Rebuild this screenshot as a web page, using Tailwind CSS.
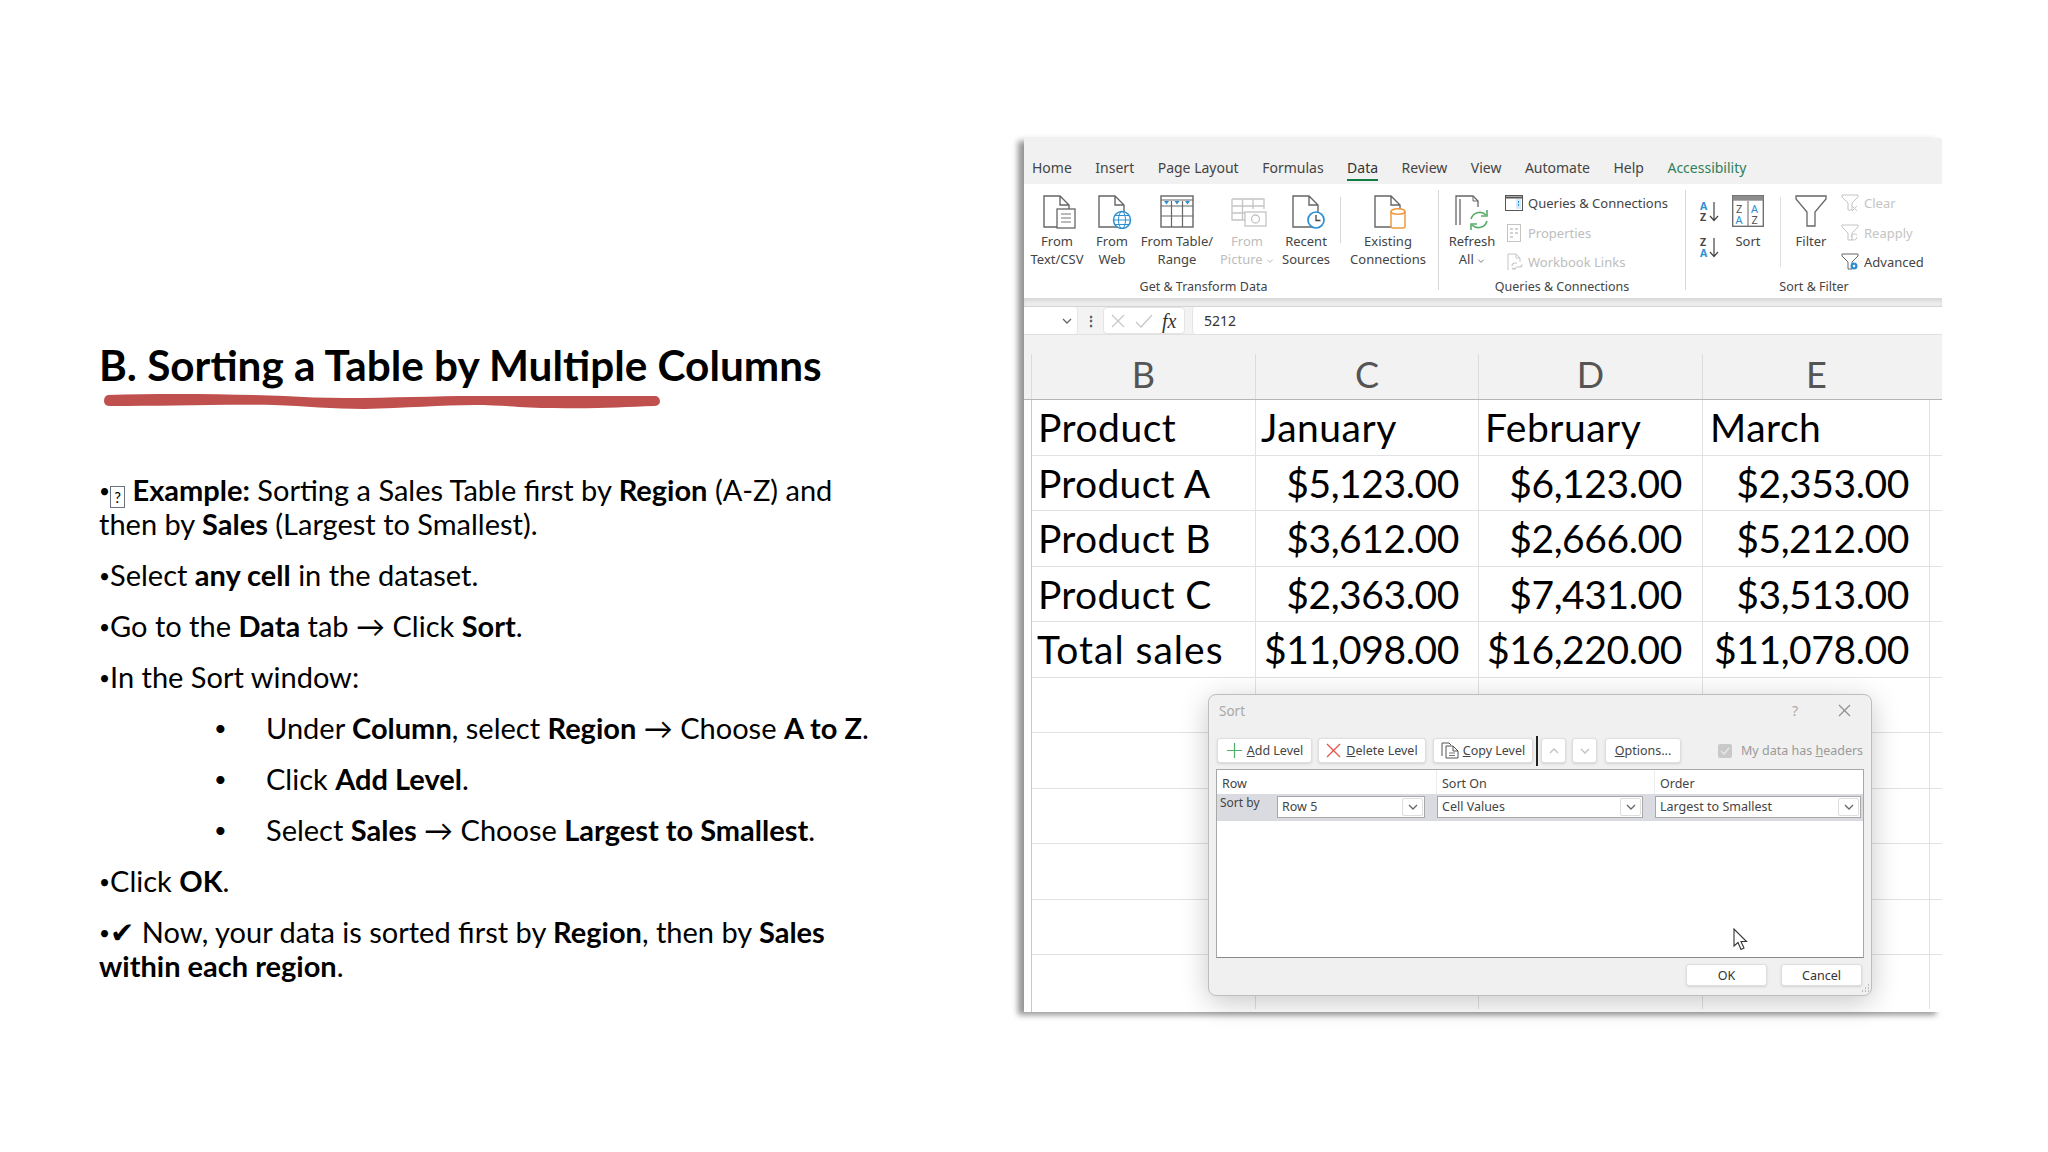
<!DOCTYPE html>
<html lang="en">
<head>
  <meta charset="UTF-8" />
  <title>Sorting a Table by Multiple Columns</title>
  <script src="https://cdn.jsdelivr.net/npm/@tailwindcss/browser@4"></script>
</head>
<body class="bg-white">
<!-- hidden icon defs -->
<svg class="hidden">
  <symbol id="doc" viewBox="0 0 27 34"><path d="M1 1H17L26 10V32H1Z M17 1V10H26" fill="none" stroke="#666" stroke-width="1.4"/></symbol>
  <symbol id="chev" viewBox="0 0 12 8"><path d="M2 2L6 6L10 2" fill="none" stroke="#666" stroke-width="1.3"/></symbol>
</svg>

<div class="flex w-[2048px] h-[1152px] overflow-hidden">
  <!-- left column: slide text -->
  <div class="w-[1024px] shrink-0 pl-[99px] pt-[337px] font-['Lato','DejaVu_Sans',sans-serif] text-black">
    <h1 class="text-[42.3px] leading-[56px] font-bold whitespace-nowrap">B. Sorting a Table by Multiple Columns</h1>
    <svg class="block ml-[5px]" width="557" height="17" viewBox="0 0 557 17"><path d="M4 2C60 0 130 1 180 3C200 4 220 5 240 5C290 5 330 3 370 3C420 3 500 3 552 3Q556 4 556 9Q555 13 550 13C520 14 490 16 450 15C420 15 400 12 370 12C340 12 300 15 260 16C230 16 200 13 170 12C120 11 60 13 6 13Q0 13 0 8Q0 3 4 2Z" fill="#c0504d"/></svg>

    <div class="mt-[63px] flex flex-col gap-[17px] text-[29px] leading-[34px] whitespace-nowrap">
      <p><span class="text-[19px] leading-none align-[3px]">•</span><span class="inline-block w-[15px] h-[22px] my-[-3px] border border-gray-500 text-[15px] leading-[20px] text-center align-[-2px]">?</span> <b>Example:</b> Sorting a Sales Table first by <b>Region</b> (A-Z) and<br>then by <b>Sales</b> (Largest to Smallest).</p>
      <p><span class="text-[19px] leading-none align-[3px]">•</span>Select <b>any cell</b> in the dataset.</p>
      <p><span class="text-[19px] leading-none align-[3px]">•</span>Go to the <b>Data</b> tab <span class="leading-none">→</span> Click <b>Sort</b>.</p>
      <p><span class="text-[19px] leading-none align-[3px]">•</span>In the Sort window:</p>
      <p class="flex"><span class="w-[167px] pl-[115px] text-[22px]">•</span><span>Under <b>Column</b>, select <b>Region</b> <span class="leading-none">→</span> Choose <b>A to Z</b>.</span></p>
      <p class="flex"><span class="w-[167px] pl-[115px] text-[22px]">•</span><span>Click <b>Add Level</b>.</span></p>
      <p class="flex"><span class="w-[167px] pl-[115px] text-[22px]">•</span><span>Select <b>Sales</b> <span class="leading-none">→</span> Choose <b>Largest to Smallest</b>.</span></p>
      <p><span class="text-[19px] leading-none align-[3px]">•</span>Click <b>OK</b>.</p>
      <p><span class="text-[19px] leading-none align-[3px]">•</span><span class="leading-none">✔</span> Now, your data is sorted first by <b>Region</b>, then by <b>Sales</b><br><b>within each region</b>.</p>
    </div>
  </div>

  <!-- right column: excel screenshot -->
  <div class="pt-[138px]">
    <div class="w-[918px] h-[874px] flex flex-col bg-white shadow-[-6px_3px_6px_rgba(0,0,0,0.42)] font-['Noto_Sans',sans-serif] text-[#444]">
      <!-- tabs -->
      <div class="h-[46px] shrink-0 bg-[#f1f1f1] flex items-start gap-[23.5px] pl-[8px] pt-[20px] text-[14px] leading-[20px] text-[#444]">
        <span>Home</span><span>Insert</span><span>Page Layout</span><span>Formulas</span>
        <span class="border-b-2 border-[#107c41] pb-[1px] text-[#333]">Data</span>
        <span>Review</span><span>View</span><span>Automate</span><span>Help</span>
        <span class="text-[#2f8059]">Accessibility</span>
      </div>

      <!-- ribbon -->
      <div class="h-[114px] shrink-0 bg-white flex text-[13px] leading-[18px]">
        <!-- Get & Transform -->
        <div class="w-[414px] flex flex-col pb-[2px]">
          <div class="flex pl-[3px] pt-[11px]">
            <div class="w-[60px] flex flex-col items-center">
              <svg class="ml-[6px]" width="34" height="34" viewBox="0 0 34 34"><use href="#doc" width="27" height="34" x="0" y="0"/><rect x="14" y="14" width="18" height="19" fill="#fff" stroke="#666" stroke-width="1.3"/><path d="M18 19H28M18 23H28M18 27H28" stroke="#777"/></svg>
              <span class="mt-[3px] text-center">From<br>Text/CSV</span>
            </div>
            <div class="w-[50px] flex flex-col items-center">
              <svg class="ml-[6px]" width="34" height="34" viewBox="0 0 34 34"><use href="#doc" width="27" height="34" x="0" y="0"/><circle cx="24" cy="25" r="8.5" fill="#fff" stroke="#2c8fd3" stroke-width="1.5"/><ellipse cx="24" cy="25" rx="3.5" ry="8.5" fill="none" stroke="#2c8fd3"/><path d="M15.5 25H32.5M17 20.5H31M17 29.5H31" stroke="#2c8fd3"/></svg>
              <span class="mt-[3px] text-center">From<br>Web</span>
            </div>
            <div class="w-[80px] flex flex-col items-center">
              <svg width="34" height="34" viewBox="0 0 34 34"><rect x="1" y="1" width="32" height="31" fill="#fff" stroke="#666" stroke-width="1.4"/><path d="M1 11H33M1 21H33M11.5 6V32M22.5 6V32M1 5H33" stroke="#666" stroke-width="1.2"/><path d="M4 6H9L6.5 9.5ZM14.5 6H19.5L17 9.5ZM25 6H30L27.500 9.500Z" fill="#2c8fd3"/></svg>
              <span class="mt-[3px] text-center">From Table/<br>Range</span>
            </div>
            <div class="w-[60px] flex flex-col items-center text-[#bdbdbd]">
              <svg class="ml-[3px]" width="36" height="34" viewBox="0 0 36 34"><path d="M1 4H33V14M1 4V25H14M1 11H33M1 18H14M11.500 4V25M22 4V14" fill="none" stroke="#c4c4c4" stroke-width="1.3"/><rect x="14" y="17" width="21" height="14" fill="#fff" stroke="#c4c4c4" stroke-width="1.3"/><circle cx="24.500" cy="24" r="4" fill="none" stroke="#c4c4c4" stroke-width="1.3"/></svg>
              <span class="mt-[3px] text-center whitespace-nowrap">From<br>Picture <svg class="inline opacity-50" width="8" height="6"><use href="#chev" width="8" height="6"/></svg></span>
            </div>
            <div class="w-[58px] flex flex-col items-center">
              <svg class="ml-[6px]" width="34" height="34" viewBox="0 0 34 34"><use href="#doc" width="27" height="34" x="0" y="0"/><circle cx="24" cy="25" r="8" fill="#fff" stroke="#2c8fd3" stroke-width="1.7"/><path d="M24 20V25.500H28.500" fill="none" stroke="#444" stroke-width="1.3"/></svg>
              <span class="mt-[3px] text-center">Recent<br>Sources</span>
            </div>
            <div class="w-px h-[46px] ml-[5px] mt-[2px] bg-[#d8d8d8]"></div>
            <div class="w-[94px] flex flex-col items-center">
              <svg class="ml-[6px]" width="34" height="34" viewBox="0 0 34 34"><use href="#doc" width="27" height="34" x="0" y="0"/><path d="M17 17V31Q17 33 19 33H29Q31 33 31 31V17Z" fill="#fff" stroke="#ed9a3f" stroke-width="1.5"/><ellipse cx="24" cy="16.500" rx="7" ry="2.800" fill="#fff" stroke="#ed9a3f" stroke-width="1.500"/></svg>
              <span class="mt-[3px] text-center">Existing<br>Connections</span>
            </div>
          </div>
          <div class="mt-auto text-center pr-[55px] text-[12.5px] text-[#444]">Get &amp; Transform Data</div>
        </div>
        <div class="w-px h-[100px] mt-[6px] bg-[#d8d8d8]"></div>

        <!-- Queries & Connections -->
        <div class="w-[246px] flex flex-col pb-[2px]">
          <div class="flex">
            <div class="w-[66px] pt-[11px] flex flex-col items-center">
              <svg width="34" height="35" viewBox="0 0 34 35"><path d="M1 30V1H18L23 6V12" fill="none" stroke="#666" stroke-width="1.300"/><path d="M5 30V4" fill="none" stroke="#666" stroke-width="1.300"/><path d="M18 1V6H23" fill="none" stroke="#666"/><path d="M16 24A9 9 0 0 1 31 20M32 26A9 9 0 0 1 17 30" fill="none" stroke="#56ad6b" stroke-width="1.600"/><path d="M32 15V21H26M16 35V29H22" fill="none" stroke="#56ad6b" stroke-width="1.600"/></svg>
              <span class="mt-[2px] text-center whitespace-nowrap">Refresh<br>All <svg class="inline" width="8" height="6"><use href="#chev" width="8" height="6"/></svg></span>
            </div>
            <div class="pt-[7px] flex flex-col gap-[5.5px] whitespace-nowrap">
              <div class="h-[24px] flex items-center gap-[5px]">
                <svg width="18" height="16" viewBox="0 0 18 16"><rect x="0.500" y="0.500" width="17" height="15" fill="#fff" stroke="#555"/><path d="M0 2.500H18" stroke="#555" stroke-width="2"/><rect x="11" y="4" width="5" height="10" fill="#d6e9f7"/><path d="M13.500 6V12" stroke="#2c8fd3" stroke-dasharray="2 1"/></svg>
                <span>Queries &amp; Connections</span>
              </div>
              <div class="h-[24px] flex items-center gap-[5px] text-[#bdbdbd]">
                <svg width="18" height="18" viewBox="0 0 18 18"><rect x="2.500" y="0.500" width="13" height="17" fill="#fff" stroke="#c4c4c4"/><path d="M5 5H8M10 5H13M5 9H8M10 9H13M5 13H8" stroke="#c4c4c4" stroke-width="1.500"/></svg>
                <span>Properties</span>
              </div>
              <div class="h-[24px] flex items-center gap-[5px] text-[#bdbdbd]">
                <svg width="18" height="18" viewBox="0 0 18 18"><path d="M3 17V1H11L15 5V9M11 1V5H15" fill="none" stroke="#c4c4c4"/><path d="M7 13Q7 10 10 10H12M11 14H14Q17 14 17 11.500M7 15Q9 17 11 15" fill="none" stroke="#c4c4c4" stroke-width="1.200"/></svg>
                <span>Workbook Links</span>
              </div>
            </div>
          </div>
          <div class="mt-auto text-center text-[12.5px]">Queries &amp; Connections</div>
        </div>
        <div class="w-px h-[100px] mt-[6px] bg-[#d8d8d8]"></div>

        <!-- Sort & Filter -->
        <div class="flex-1 flex flex-col pb-[2px]">
          <div class="flex">
            <div class="ml-[14px] w-[18px] pt-[17px] flex flex-col gap-[15px]">
              <svg width="19" height="21" viewBox="0 0 19 21"><text x="0" y="9" font-size="10.500" font-weight="700" fill="#2c8fd3" font-family="Noto Sans">A</text><text x="0" y="20" font-size="10.500" font-weight="700" fill="#444" font-family="Noto Sans">Z</text><path d="M14 1V19M10 15L14 19.500L18 15" fill="none" stroke="#444" stroke-width="1.200"/></svg>
              <svg width="19" height="21" viewBox="0 0 19 21"><text x="0" y="9" font-size="10.500" font-weight="700" fill="#444" font-family="Noto Sans">Z</text><text x="0" y="20" font-size="10.500" font-weight="700" fill="#2c8fd3" font-family="Noto Sans">A</text><path d="M14 1V19M10 15L14 19.500L18 15" fill="none" stroke="#444" stroke-width="1.200"/></svg>
            </div>
            <div class="ml-[12px] w-[36px] pt-[11px] flex flex-col items-center">
              <svg width="32" height="32" viewBox="0 0 32 32"><rect x="0.700" y="0.700" width="30.600" height="30.600" fill="#fff" stroke="#666" stroke-width="1.300"/><rect x="0.700" y="0.700" width="30.600" height="5" fill="#8c8c8c"/><path d="M16 6V31" stroke="#666"/><text x="4" y="18" font-size="11" fill="#555" font-family="Noto Sans">Z</text><text x="3.500" y="29" font-size="11" fill="#2c8fd3" font-family="Noto Sans">A</text><text x="19" y="18" font-size="11" fill="#2c8fd3" font-family="Noto Sans">A</text><text x="19.500" y="29" font-size="11" fill="#555" font-family="Noto Sans">Z</text></svg>
              <span class="mt-[5px]">Sort</span>
            </div>
            <div class="w-px h-[70px] ml-[14px] mt-[13px] bg-[#e0e0e0]"></div>
            <div class="ml-[9px] w-[42px] pt-[11px] flex flex-col items-center">
              <svg width="32" height="32" viewBox="0 0 32 32"><path d="M1 1H31V4L20 17V31H12V17L1 4Z" fill="#fff" stroke="#666" stroke-width="1.300"/></svg>
              <span class="mt-[5px]">Filter</span>
            </div>
            <div class="ml-[9px] pt-[7px] flex flex-col gap-[5.5px] whitespace-nowrap">
              <div class="h-[24px] flex items-center gap-[5px] text-[#c4c4c4]">
                <svg width="18" height="18" viewBox="0 0 18 18"><path d="M1 1H17V3L11 9V16H7V9L1 3Z" fill="#fff" stroke="#c4c4c4"/><path d="M11 12L16 17M16 12L11 17" stroke="#c4c4c4"/></svg>
                <span>Clear</span>
              </div>
              <div class="h-[24px] flex items-center gap-[5px] text-[#c4c4c4]">
                <svg width="18" height="18" viewBox="0 0 18 18"><path d="M1 1H17V3L11 9V16H7V9L1 3Z" fill="#fff" stroke="#c4c4c4"/><path d="M10 13A3.500 3.500 0 0 1 16 11M16 13A3.500 3.500 0 0 1 10 15" fill="none" stroke="#c4c4c4"/></svg>
                <span>Reapply</span>
              </div>
              <div class="h-[24px] flex items-center gap-[5px] text-[#444]">
                <svg width="18" height="18" viewBox="0 0 18 18"><path d="M1 1H17V3L11 9V16H7V9L1 3Z" fill="#fff" stroke="#666"/><circle cx="13" cy="13" r="3.500" fill="#2c8fd3"/><circle cx="13" cy="13" r="1.200" fill="#fff"/></svg>
                <span>Advanced</span>
              </div>
            </div>
          </div>
          <div class="mt-auto text-center text-[12.5px]">Sort &amp; Filter</div>
        </div>
      </div>

      <!-- formula bar -->
      <div class="h-[9px] shrink-0 bg-[#ececec] shadow-[inset_0_3px_3px_rgba(0,0,0,0.08)] border-b border-[#d4d4d4]"></div>
      <div class="h-[28px] shrink-0 bg-[#f3f3f3] flex items-stretch border-b border-[#e0e0e0]">
        <div class="w-[54px] bg-white rounded-r-[4px] border-r border-[#e4e4e4] flex items-center justify-end pr-[4px]">
          <svg width="12" height="8"><use href="#chev" width="12" height="8"/></svg>
        </div>
        <div class="w-[25px] flex items-center justify-center text-[#555] font-bold text-[14px] leading-none">⋮</div>
        <div class="w-[82px] bg-white rounded-[4px] border border-[#e4e4e4] flex items-center gap-[9px] pl-[6px]">
          <svg width="16" height="16" viewBox="0 0 16 16"><path d="M2 2L14 14M14 2L2 14" stroke="#c8c8c8" stroke-width="1.300"/></svg>
          <svg width="18" height="16" viewBox="0 0 18 16"><path d="M1 9L6 14L17 2" fill="none" stroke="#c8c8c8" stroke-width="1.300"/></svg>
          <span class="font-['Liberation_Serif',serif] italic text-[20px] leading-none text-[#333]">fx</span>
        </div>
        <div class="ml-[7px] flex-1 bg-white rounded-l-[4px] border-l border-[#e4e4e4] pl-[11px] text-[14px] leading-[28px] text-[#333]">5212</div>
      </div>

      <!-- column headers -->
      <div class="h-[65px] shrink-0 bg-[#f2f2f2] flex items-end border-b border-[#b5b5b5] text-[#555] font-['Lato',sans-serif] text-[36px] leading-[41px]">
        <div class="w-[8px] h-[45px] border-r border-[#dcdcdc]"></div>
        <div class="w-[224px] h-[45px] border-r border-[#dcdcdc] text-center">B</div>
        <div class="w-[223px] h-[45px] border-r border-[#dcdcdc] text-center">C</div>
        <div class="w-[224px] h-[45px] border-r border-[#dcdcdc] text-center">D</div>
        <div class="w-[227px] h-[45px] text-center">E</div>
      </div>

      <!-- sheet -->
      <div class="relative flex-1 pl-[8px] font-['Lato',sans-serif] text-black text-[39px] leading-[55px] whitespace-nowrap">
        <div class="absolute left-[7px] top-0 bottom-0 w-px bg-[#c8c8c8]"></div>
        <div class="flex h-[55.5px] border-b border-[#e2e2e2] tracking-[0.5px]"><div class="w-[224px] pl-[6px] border-r border-[#e2e2e2]">Product</div><div class="w-[223px] pl-[5px] border-r border-[#e2e2e2]">January</div><div class="w-[224px] pl-[6px] border-r border-[#e2e2e2]">February</div><div class="w-[227px] pl-[7px] border-r border-[#e2e2e2]">March</div></div>
        <div class="flex h-[55.5px] border-b border-[#e2e2e2] tracking-[-0.4px]"><div class="w-[224px] pl-[6px] border-r border-[#e2e2e2] tracking-[0.3px]">Product A</div><div class="w-[223px] pr-[19px] text-right border-r border-[#e2e2e2]">$5,123.00</div><div class="w-[224px] pr-[20px] text-right border-r border-[#e2e2e2]">$6,123.00</div><div class="w-[227px] pr-[20px] text-right border-r border-[#e2e2e2]">$2,353.00</div></div>
        <div class="flex h-[55.5px] border-b border-[#e2e2e2] tracking-[-0.4px]"><div class="w-[224px] pl-[6px] border-r border-[#e2e2e2] tracking-[0.3px]">Product B</div><div class="w-[223px] pr-[19px] text-right border-r border-[#e2e2e2]">$3,612.00</div><div class="w-[224px] pr-[20px] text-right border-r border-[#e2e2e2]">$2,666.00</div><div class="w-[227px] pr-[20px] text-right border-r border-[#e2e2e2]">$5,212.00</div></div>
        <div class="flex h-[55.5px] border-b border-[#e2e2e2] tracking-[-0.4px]"><div class="w-[224px] pl-[6px] border-r border-[#e2e2e2] tracking-[0.3px]">Product C</div><div class="w-[223px] pr-[19px] text-right border-r border-[#e2e2e2]">$2,363.00</div><div class="w-[224px] pr-[20px] text-right border-r border-[#e2e2e2]">$7,431.00</div><div class="w-[227px] pr-[20px] text-right border-r border-[#e2e2e2]">$3,513.00</div></div>
        <div class="flex h-[55.5px] border-b border-[#e2e2e2] tracking-[-0.4px]"><div class="w-[224px] pl-[5px] border-r border-[#e2e2e2] tracking-[1px]">Total sales</div><div class="w-[223px] pr-[19px] text-right border-r border-[#e2e2e2]">$11,098.00</div><div class="w-[224px] pr-[20px] text-right border-r border-[#e2e2e2]">$16,220.00</div><div class="w-[227px] pr-[20px] text-right border-r border-[#e2e2e2]">$11,078.00</div></div>
        <div class="flex h-[55.5px] border-b border-[#e2e2e2]"><div class="w-[224px] border-r border-[#e2e2e2]"></div><div class="w-[223px] border-r border-[#e2e2e2]"></div><div class="w-[224px] border-r border-[#e2e2e2]"></div><div class="w-[227px] border-r border-[#e2e2e2]"></div></div>
        <div class="flex h-[55.5px] border-b border-[#e2e2e2]"><div class="w-[224px] border-r border-[#e2e2e2]"></div><div class="w-[223px] border-r border-[#e2e2e2]"></div><div class="w-[224px] border-r border-[#e2e2e2]"></div><div class="w-[227px] border-r border-[#e2e2e2]"></div></div>
        <div class="flex h-[55.5px] border-b border-[#e2e2e2]"><div class="w-[224px] border-r border-[#e2e2e2]"></div><div class="w-[223px] border-r border-[#e2e2e2]"></div><div class="w-[224px] border-r border-[#e2e2e2]"></div><div class="w-[227px] border-r border-[#e2e2e2]"></div></div>
        <div class="flex h-[55.5px] border-b border-[#e2e2e2]"><div class="w-[224px] border-r border-[#e2e2e2]"></div><div class="w-[223px] border-r border-[#e2e2e2]"></div><div class="w-[224px] border-r border-[#e2e2e2]"></div><div class="w-[227px] border-r border-[#e2e2e2]"></div></div>
        <div class="flex h-[55.5px] border-b border-[#e2e2e2]"><div class="w-[224px] border-r border-[#e2e2e2]"></div><div class="w-[223px] border-r border-[#e2e2e2]"></div><div class="w-[224px] border-r border-[#e2e2e2]"></div><div class="w-[227px] border-r border-[#e2e2e2]"></div></div>
        <div class="flex h-[54px]"><div class="w-[224px] border-r border-[#e2e2e2]"></div><div class="w-[223px] border-r border-[#e2e2e2]"></div><div class="w-[224px] border-r border-[#e2e2e2]"></div><div class="w-[227px] border-r border-[#e2e2e2]"></div></div>

        <!-- sort dialog -->
        <div class="absolute left-[184px] top-[294px] w-[664px] h-[302px] flex flex-col bg-[#f0f0f0] border border-[#bdbdbd] rounded-[8px] shadow-[0_6px_28px_rgba(0,0,0,0.22)] font-['Noto_Sans',sans-serif] text-[12.5px] leading-[18px] text-[#444] tracking-normal">
          <div class="h-[31px] shrink-0 flex items-center justify-between pl-[10px] pr-[20px] text-[13.5px] text-[#a8a8a8]">
            <span>Sort</span>
            <div class="flex items-center gap-[40px]">
              <span class="text-[14px]">?</span>
              <svg width="13" height="13" viewBox="0 0 13 13"><path d="M1 1L12 12M12 1L1 12" stroke="#8f8f8f" stroke-width="1.200"/></svg>
            </div>
          </div>
          <!-- toolbar -->
          <div class="mt-[12px] h-[25px] shrink-0 flex items-center pl-[8px]">
            <div class="w-[95px] h-[25px] flex items-center justify-center gap-[4px] bg-white border border-[#dedede] rounded-[3px] shadow-sm">
              <svg width="17" height="17" viewBox="0 0 17 17"><path d="M8.500 1V16M1 8.500H16" stroke="#4caf6a" stroke-width="1.200"/></svg><span><u>A</u>dd Level</span>
            </div>
            <div class="ml-[6px] w-[108px] h-[25px] flex items-center justify-center gap-[5px] bg-white border border-[#dedede] rounded-[3px] shadow-sm">
              <svg width="15" height="15" viewBox="0 0 15 15"><path d="M1 1L14 14M14 1L1 14" stroke="#e5534b" stroke-width="1.300"/></svg><span><u>D</u>elete Level</span>
            </div>
            <div class="ml-[7px] w-[100px] h-[25px] flex items-center justify-center gap-[4px] bg-white border border-[#dedede] rounded-[3px] shadow-sm">
              <svg width="18" height="17" viewBox="0 0 18 17"><path d="M1 14V1H8L10 3M5 4H12L17 9V16H5Z M12 4V9H17" fill="#fff" stroke="#555"/><path d="M8 11H14M8 13.500H14" stroke="#777"/></svg><span><u>C</u>opy Level</span>
            </div>
            <div class="ml-[3px] w-[2px] h-[30px] bg-[#222]"></div>
            <div class="ml-[3px] w-[25px] h-[25px] flex items-center justify-center bg-white border border-[#dedede] rounded-[3px] shadow-sm">
              <svg width="12" height="8" class="rotate-180 opacity-40"><use href="#chev" width="12" height="8"/></svg>
            </div>
            <div class="ml-[6px] w-[25px] h-[25px] flex items-center justify-center bg-white border border-[#dedede] rounded-[3px] shadow-sm">
              <svg width="12" height="8" class="opacity-40"><use href="#chev" width="12" height="8"/></svg>
            </div>
            <div class="ml-[8px] w-[76px] h-[25px] flex items-center justify-center bg-white border border-[#dedede] rounded-[3px] shadow-sm"><span><u>O</u>ptions...</span></div>
            <div class="ml-[37px] w-[14px] h-[14px] bg-[#c9c9c9] rounded-[2px] flex items-center justify-center">
              <svg width="10" height="8" viewBox="0 0 10 8"><path d="M1 4L4 7L9 1" fill="none" stroke="#e8e8e8" stroke-width="1.300"/></svg>
            </div>
            <span class="ml-[9px] text-[#9a9a9a] whitespace-nowrap">My data has <u>h</u>eaders</span>
          </div>
          <!-- level list -->
          <div class="mt-[6px] mx-[7px] h-[189px] shrink-0 bg-white border border-[#a8a8a8] border-b-[#888]">
            <div class="flex h-[24px]">
              <div class="w-[220px] h-full pl-[5px] leading-[27px] border-r border-[#ececec]">Row</div>
              <div class="w-[218px] h-full pl-[5px] leading-[27px] border-r border-[#ececec]">Sort On</div>
              <div class="pl-[5px] leading-[27px]">Order</div>
            </div>
            <div class="flex h-[27px] bg-[#d9dbe0] pt-[2px]">
              <span class="w-[60px] pl-[3px] leading-[14px] text-[12px]">Sort by</span>
              <div class="w-[148px] h-[22px] bg-white border border-[#a8a8a8] flex items-center justify-between pl-[4px] pr-px">
                <span>Row 5</span><span class="w-[21px] h-[18px] border border-[#dedede] rounded-[2px] flex items-center justify-center"><svg width="12" height="8"><use href="#chev" width="12" height="8"/></svg></span>
              </div>
              <div class="ml-[12px] w-[206px] h-[22px] bg-white border border-[#a8a8a8] flex items-center justify-between pl-[4px] pr-px">
                <span>Cell Values</span><span class="w-[21px] h-[18px] border border-[#dedede] rounded-[2px] flex items-center justify-center"><svg width="12" height="8"><use href="#chev" width="12" height="8"/></svg></span>
              </div>
              <div class="ml-[12px] w-[206px] h-[22px] bg-white border border-[#a8a8a8] flex items-center justify-between pl-[4px] pr-px">
                <span>Largest to Smallest</span><span class="w-[21px] h-[18px] border border-[#dedede] rounded-[2px] flex items-center justify-center"><svg width="12" height="8"><use href="#chev" width="12" height="8"/></svg></span>
              </div>
            </div>
          </div>
          <!-- footer -->
          <div class="mt-[6px] flex justify-end gap-[14px] pr-[9px]">
            <div class="w-[81px] h-[22px] leading-[21px] text-center bg-white border border-[#dedede] rounded-[3px] shadow-sm text-[#333]">OK</div>
            <div class="w-[81px] h-[22px] leading-[21px] text-center bg-white border border-[#dedede] rounded-[3px] shadow-sm text-[#333]">Cancel</div>
          </div>
          <!-- mouse pointer -->
          <svg class="absolute left-[524px] top-[233px]" width="15" height="23" viewBox="0 0 15 23"><path d="M1 1V18L5 14.500L8 21.500L11 20L8 13.500H13.500Z" fill="#fff" stroke="#333" stroke-width="1.100"/></svg>
          <!-- resize grip -->
          <svg class="absolute right-[1px] bottom-[1px]" width="10" height="10" viewBox="0 0 10 10"><path d="M8 1H9M5 4H6M8 4H9M2 7H3M5 7H6M8 7H9" stroke="#aaa" stroke-width="1.500"/></svg>
        </div>
      </div>
    </div>
  </div>
</div>
</body>
</html>
